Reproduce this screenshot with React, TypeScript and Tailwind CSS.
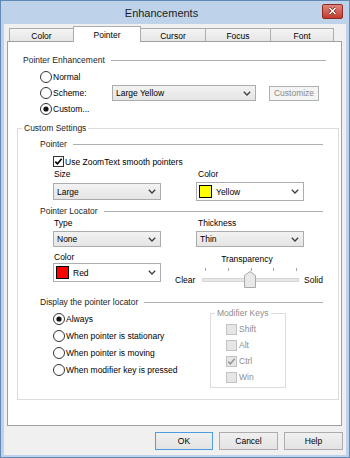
import React from "react";

const Chevron = () => (
  <svg width="8" height="5" viewBox="0 0 8 5" className="shrink-0">
    <path d="M0.8 0.8 L4 4 L7.2 0.8" fill="none" stroke="#3c3c3c" strokeWidth="1.3" />
  </svg>
);

const Radio = ({ checked }: { checked?: boolean }) => (
  <svg width="12" height="12" viewBox="0 0 12 12" className="shrink-0">
    <circle cx="6" cy="6" r="5.5" fill="#fff" stroke="#333" />
    {checked && <circle cx="6" cy="6" r="2.6" fill="#111" />}
  </svg>
);

const Check = ({ checked, disabled }: { checked?: boolean; disabled?: boolean }) => (
  <svg width="11" height="11" viewBox="0 0 11 11" className="shrink-0">
    <rect x="0.5" y="0.5" width="10" height="10" fill={disabled ? "#e6e6e6" : "#fff"} stroke={disabled ? "#c2c2c2" : "#333"} />
    {checked && (
      <path d="M2.3 5.6 L4.4 7.8 L8.7 2.8" fill="none" stroke={disabled ? "#9a9a9a" : "#000"} strokeWidth="1.6" />
    )}
  </svg>
);

const Heading = ({ label }: { label: string }) => (
  <div className="flex items-center h-[12px]">
    <span className="whitespace-nowrap text-[#1e1e1e]">{label}</span>
    <div className="flex-1 h-px bg-[#b0b0b0] ml-[6px]" />
  </div>
);

const GreyCombo = ({ text, className }: { text: string; className: string }) => (
  <div
    className={
      "flex items-center justify-between border border-[#acacac] bg-gradient-to-b from-[#f2f2f2] to-[#e5e5e5] pl-[3px] pr-[4px] " +
      className
    }
  >
    <span>{text}</span>
    <Chevron />
  </div>
);

const ColorCombo = ({ text, color }: { text: string; color: string }) => (
  <div className="flex items-center w-[108px] h-[19px] border border-[#abadb3] bg-white pl-[2px] pr-[4px]">
    <div className="w-[13px] h-[13px] border border-black shrink-0" style={{ background: color }} />
    <span className="ml-[4px] flex-1">{text}</span>
    <Chevron />
  </div>
);

const Tab = ({ label, w, selected, first }: { label: string; w: string; selected?: boolean; first?: boolean }) => (
  <div
    className={
      (selected
        ? "h-[16px] bg-white relative z-10 "
        : "h-[14px] bg-gradient-to-b from-[#f4f4f4] to-[#e5e5e5] ") +
      (first ? "" : "-ml-px ") +
      "border border-b-0 border-[#acacac] flex items-center justify-center " +
      w
    }
  >
    {label}
  </div>
);

const Button = ({ label, def, w }: { label: string; def?: boolean; w: string }) => (
  <div
    className={
      "h-[18px] flex items-center justify-center border bg-gradient-to-b from-[#f0f0f0] to-[#e3e3e3] " +
      (def ? "border-[#4d9be0] " : "border-[#acacac] ") +
      w
    }
  >
    {label}
  </div>
);

export default function App() {
  return (
    <div className="w-[350px] h-[458px] bg-[#bed3ea] border border-[#5f8ab8] flex flex-col font-['Liberation_Sans',Arial,sans-serif] text-[8.5px] leading-[12px] text-black overflow-hidden">
      {/* Title bar */}
      <div className="h-[23px] flex items-center shrink-0">
        <div className="flex-1 text-center text-[11px] text-[#1b1b1b]">Enhancements</div>
        <div className="w-[21px] h-[15px] mr-[6px] mb-[3px] rounded-[2px] border border-[#8e2b22] bg-gradient-to-b from-[#e0867b] to-[#c2392d] flex items-center justify-center">
          <svg width="9" height="8" viewBox="0 0 9 8">
            <path d="M1.5 1 L7.5 7 M7.5 1 L1.5 7" stroke="#5a1510" strokeWidth="2.6" />
            <path d="M1.5 1 L7.5 7 M7.5 1 L1.5 7" stroke="#fff" strokeWidth="1.6" />
          </svg>
        </div>
      </div>

      {/* Client */}
      <div className="ml-[3px] w-[342px] h-[431px] bg-[#f0f0f0] flex flex-col">
        {/* Tabs */}
        <div className="flex items-end h-[16px] mt-[2px] pl-[5px]">
          <Tab label="Color" w="w-[65px]" first />
          <Tab label="Pointer" w="w-[68px]" selected />
          <Tab label="Cursor" w="w-[66px]" />
          <Tab label="Focus" w="w-[66px]" />
          <Tab label="Font" w="w-[64px]" />
        </div>

        {/* Panel */}
        <div className="-mt-px ml-[3px] w-[335px] h-[385px] bg-white border border-[#a0a0a0] flex flex-col">
          <div className="mt-[12px] ml-[15px] mr-[15px]">
            <Heading label="Pointer Enhancement" />
          </div>

          <div className="mt-[3px] pl-[32px]">
            <div className="flex items-center h-[16px]">
              <Radio />
              <span className="ml-[1px]">Normal</span>
            </div>
            <div className="flex items-center h-[16px]">
              <div className="flex items-center w-[72px]">
                <Radio />
                <span className="ml-[1px]">Scheme:</span>
              </div>
              <GreyCombo text="Large Yellow" className="w-[144px] h-[16px]" />
              <div className="ml-[13px] w-[50px] h-[15px] border border-[#adb2b5] bg-[#f4f4f4] text-[#8a8a8a] flex items-center justify-center">
                Customize
              </div>
            </div>
            <div className="flex items-center h-[16px]">
              <Radio checked />
              <span className="ml-[1px]">Custom...</span>
            </div>
          </div>

          {/* Custom Settings group */}
          <fieldset className="mt-[5px] ml-[9px] mr-[8px] border border-[#dcdcdc]">
            <legend className="ml-[4px] px-[2px] text-[#1e1e1e]">Custom Settings</legend>
            <div className="pl-[22px] pr-[15px] pb-[11px]">
              <div className="mt-[4px]">
                <Heading label="Pointer" />
              </div>
              <div className="mt-[5px] h-[13px] flex items-center pl-[13px]">
                <Check checked />
                <span className="ml-[1px]">Use ZoomText smooth pointers</span>
              </div>
              <div className="flex h-[12px] pl-[14px]">
                <span className="w-[144px]">Size</span>
                <span>Color</span>
              </div>
              <div className="mt-[2px] flex items-center h-[19px] pl-[13px]">
                <GreyCombo text="Large" className="w-[108px] h-[17px]" />
                <div className="ml-[35px]">
                  <ColorCombo text="Yellow" color="#ffff00" />
                </div>
              </div>

              <div className="mt-[4px]">
                <Heading label="Pointer Locator" />
              </div>
              <div className="flex h-[12px] pl-[14px]">
                <span className="w-[144px]">Type</span>
                <span>Thickness</span>
              </div>
              <div className="mt-[2px] flex items-center pl-[13px]">
                <GreyCombo text="None" className="w-[108px] h-[16px]" />
                <GreyCombo text="Thin" className="ml-[35px] w-[108px] h-[16px]" />
              </div>

              <div className="mt-[4px] flex items-start pl-[13px]">
                <div className="w-[108px] flex flex-col">
                  <span className="ml-[1px] h-[12px]">Color</span>
                  <ColorCombo text="Red" color="#ff0000" />
                </div>
                <div className="ml-[14px] flex flex-col">
                  <div className="mt-[2px] ml-[22px] w-[100px] h-[12px] text-center">Transparency</div>
                  <div className="flex items-start">
                    <span className="mt-[9px] w-[25px]">Clear</span>
                    <div className="relative w-[102px] h-[23px]">
                      <div className="mt-[3px] h-[3px] flex justify-between px-[5px]">
                        <div className="w-px h-[3px] bg-[#a6a6a6]" />
                        <div className="w-px h-[3px] bg-[#a6a6a6]" />
                        <div className="w-px h-[3px] bg-[#a6a6a6]" />
                        <div className="w-px h-[3px] bg-[#a6a6a6]" />
                        <div className="w-px h-[3px] bg-[#a6a6a6]" />
                      </div>
                      <div className="mt-[7px] ml-[2px] w-[97px] h-[4px] border border-[#d6d6d6] bg-[#e7e7e7]" />
                      <svg width="12" height="17" viewBox="0 0 12 17" className="absolute left-[44px] top-[6px]">
                        <path d="M0.5 4.5 L6 0.5 L11.5 4.5 V16.5 H0.5 Z" fill="#e9e9e9" stroke="#a9a9a9" />
                      </svg>
                    </div>
                    <span className="mt-[9px] ml-[2px]">Solid</span>
                  </div>
                </div>
              </div>

              <div className="mt-[8px]">
                <Heading label="Display the pointer locator" />
              </div>
              <div className="flex items-start">
                <div className="w-[170px] pl-[13px] mt-[2px]">
                  <div className="flex items-center h-[17px]">
                    <Radio checked />
                    <span className="ml-[1px]">Always</span>
                  </div>
                  <div className="flex items-center h-[17px]">
                    <Radio />
                    <span className="ml-[1px]">When pointer is stationary</span>
                  </div>
                  <div className="flex items-center h-[17px]">
                    <Radio />
                    <span className="ml-[1px]">When pointer is moving</span>
                  </div>
                  <div className="flex items-center h-[17px]">
                    <Radio />
                    <span className="ml-[1px]">When modifier key is pressed</span>
                  </div>
                </div>
                <fieldset className="-mt-px w-[76px] border border-[#dcdcdc]">
                  <legend className="ml-[4px] px-[2px] text-[#8d8d8d]">Modifier Keys</legend>
                  <div className="pl-[15px] mt-[2px] pb-[2px] text-[#8d8d8d]">
                    <div className="flex items-center h-[16px]">
                      <Check disabled />
                      <span className="ml-[2px]">Shift</span>
                    </div>
                    <div className="flex items-center h-[16px]">
                      <Check disabled />
                      <span className="ml-[2px]">Alt</span>
                    </div>
                    <div className="flex items-center h-[16px]">
                      <Check disabled checked />
                      <span className="ml-[2px]">Ctrl</span>
                    </div>
                    <div className="flex items-center h-[16px]">
                      <Check disabled />
                      <span className="ml-[2px]">Win</span>
                    </div>
                  </div>
                </fieldset>
              </div>
            </div>
          </fieldset>
        </div>

        {/* Buttons */}
        <div className="mt-[6px] flex justify-end gap-[6px] pr-[3px]">
          <Button label="OK" def w="w-[58px]" />
          <Button label="Cancel" w="w-[59px]" />
          <Button label="Help" w="w-[59px]" />
        </div>
      </div>
    </div>
  );
}
